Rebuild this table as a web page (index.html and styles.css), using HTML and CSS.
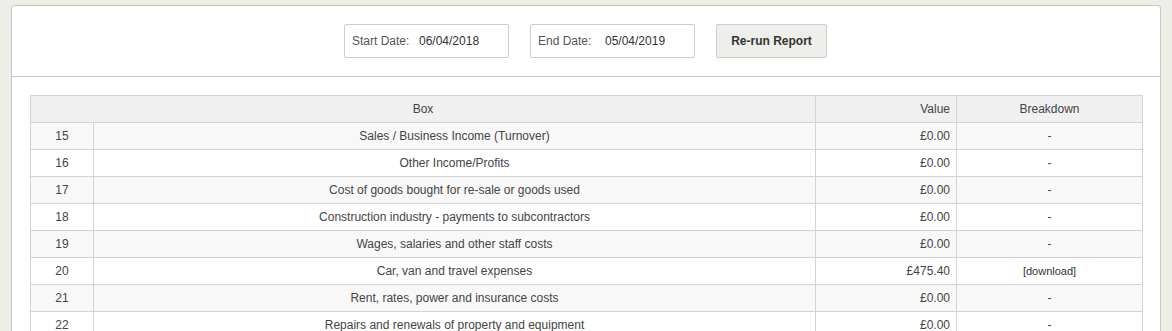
FILE: index.html
```html
<!DOCTYPE html>
<html>
<head>
<meta charset="utf-8">
<link rel="stylesheet" href="styles.css">
</head>
<body>
<div class="panel">
  <div class="toolbar">
    <div class="field"><span class="label">Start Date:</span><span class="value">06/04/2018</span></div>
    <div class="field"><span class="label">End Date:</span><span class="value">05/04/2019</span></div>
    <button class="btn">Re-run Report</button>
  </div>
  <div class="content">
    <table class="report">
      <colgroup>
        <col class="c-num"><col class="c-box"><col class="c-val"><col class="c-brk">
      </colgroup>
      <thead>
        <tr><th colspan="2">Box</th><th class="val">Value</th><th>Breakdown</th></tr>
      </thead>
      <tbody>
        <tr><td>15</td><td>Sales / Business Income (Turnover)</td><td class="val">£0.00</td><td>-</td></tr>
        <tr><td>16</td><td>Other Income/Profits</td><td class="val">£0.00</td><td>-</td></tr>
        <tr><td>17</td><td>Cost of goods bought for re-sale or goods used</td><td class="val">£0.00</td><td>-</td></tr>
        <tr><td>18</td><td>Construction industry - payments to subcontractors</td><td class="val">£0.00</td><td>-</td></tr>
        <tr><td>19</td><td>Wages, salaries and other staff costs</td><td class="val">£0.00</td><td>-</td></tr>
        <tr><td>20</td><td>Car, van and travel expenses</td><td class="val">£475.40</td><td class="dl">[download]</td></tr>
        <tr><td>21</td><td>Rent, rates, power and insurance costs</td><td class="val">£0.00</td><td>-</td></tr>
        <tr><td>22</td><td>Repairs and renewals of property and equipment</td><td class="val">£0.00</td><td>-</td></tr>
      </tbody>
    </table>
  </div>
</div>
</body>
</html>
```

FILE: styles.css
```css
html, body {
  margin: 0;
  padding: 0;
  background: #eeeee9;
  font-family: "Liberation Sans", Arial, sans-serif;
  font-size: 12px;
  color: #333;
}

.panel {
  margin: 5px 0 0 11px;
  width: 1148px;
  height: 400px;
  background: #fff;
  border: 1px solid #c6c6c6;
  border-radius: 3px;
}

.toolbar {
  display: flex;
  justify-content: center;
  align-items: center;
  gap: 21px;
  padding: 18px 1px 18px 0;
  border-bottom: 1px solid #c6c6c6;
}

.field {
  box-sizing: border-box;
  width: 165px;
  height: 34px;
  border: 1px solid #ccc;
  border-radius: 2px;
  display: flex;
  align-items: center;
  padding: 0 7px;
  font-size: 12px;
}

.field .label {
  width: 67px;
  color: #555;
}

.field .value {
  color: #333;
}

.btn {
  box-sizing: border-box;
  width: 111px;
  height: 34px;
  background: #eeeeea;
  border: 1px solid #ccc;
  border-radius: 2px;
  font-family: "Liberation Sans", Arial, sans-serif;
  font-size: 12px;
  font-weight: bold;
  color: #333;
  padding: 0;
}

.content {
  padding: 18px 18px 0 18px;
}

.report {
  width: 1112px;
  border-collapse: collapse;
  table-layout: fixed;
}

.c-num { width: 63px; }
.c-box { width: 722px; }
.c-val { width: 141px; }
.c-brk { width: 186px; }

.report th,
.report td {
  border: 1px solid #d3d3d3;
  height: 26px;
  padding: 0 6px;
  text-align: center;
  font-weight: normal;
  color: #444;
  line-height: 14px;
}

.report thead th {
  background: #f0f0f0;
}

.report tbody tr:nth-child(odd) td {
  background: #f8f8f8;
}

.report .val {
  text-align: right;
}

.report .dl {
  font-size: 11px;
  color: #333;
}
```
